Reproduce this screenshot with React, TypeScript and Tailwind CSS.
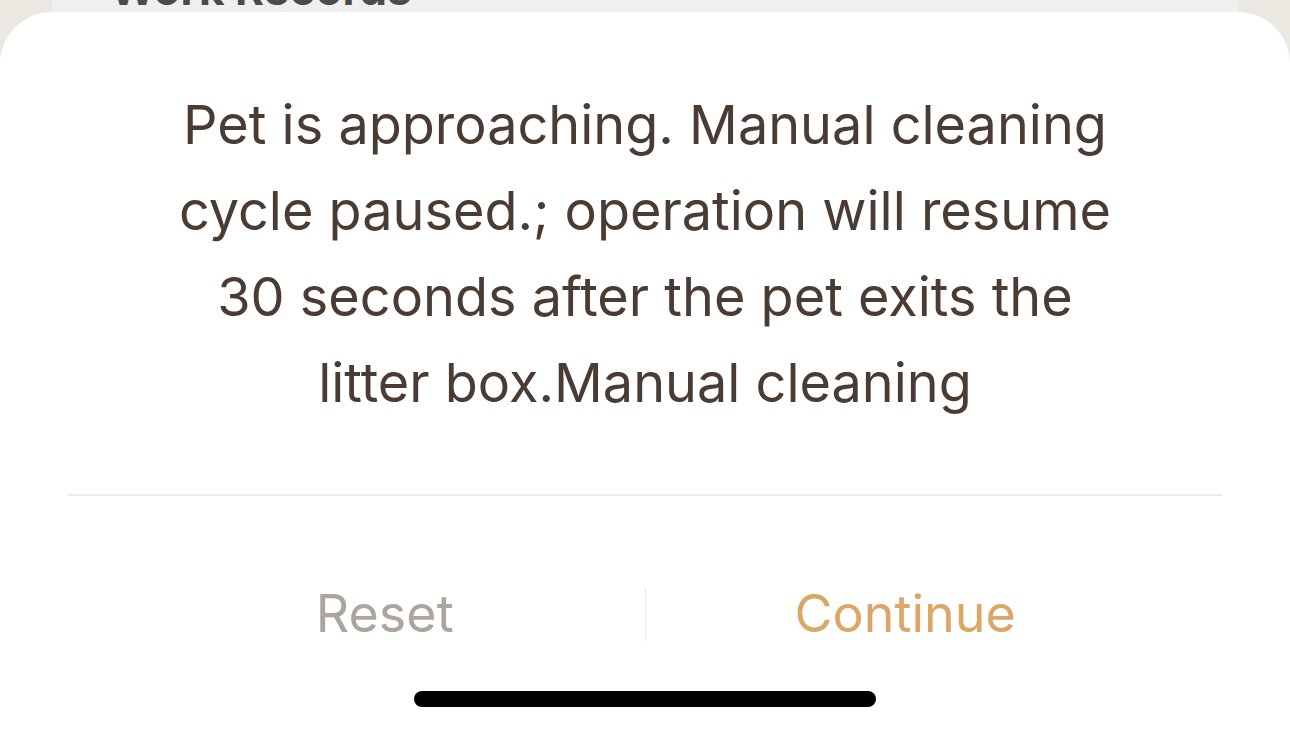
import React from "react";

const message =
  "Pet is approaching. Manual cleaning cycle paused.; operation will resume 30 seconds after the pet exits the litter box.Manual cleaning";

export default function App() {
  return (
    <div
      className="h-[729px] w-full overflow-hidden bg-[#ebe7e1] flex flex-col"
      style={{ fontFamily: "Inter, 'Noto Sans', sans-serif" }}
    >
      {/* list row peeking out behind the sheet */}
      <div className="h-[12px] shrink-0 overflow-hidden px-[52px]">
        <div className="h-full bg-[#efefef] flex justify-between pl-[58px] pr-[70px]">
          <span className="-mt-[33px] text-[44px] font-bold leading-[44px] text-[#4b4b4b]">Work Records</span>
          <span className="-mt-[24px] text-[30px] leading-[30px] text-[#9a9a9a]">›</span>
        </div>
      </div>

      {/* alert sheet */}
      <div className="flex-1 bg-white rounded-t-[52px] flex flex-col">
        <p className="mx-auto mt-[70px] w-[950px] text-center text-[54px] leading-[86px] text-[#4a3b33]">
          {message}
        </p>

        <div className="mx-[68px] mt-[68px] h-[2px] bg-[#ececec]" />

        <div className="mt-[91px] flex items-center px-[125px]">
          <button className="flex-1 text-center text-[52px] leading-[54px] text-[#aca59e]">Reset</button>
          <div className="h-[53px] w-px bg-[#ececec]" />
          <button className="flex-1 text-center text-[52px] leading-[54px] text-[#dba666]">Continue</button>
        </div>

        <div className="mx-auto mt-[50px] h-[16px] w-[462px] rounded-full bg-black" />
      </div>
    </div>
  );
}
